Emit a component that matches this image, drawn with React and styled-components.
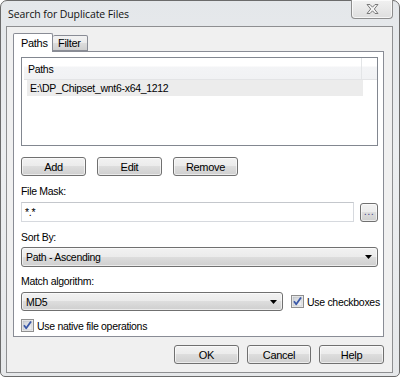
import React from "react";
import styled, { createGlobalStyle } from "styled-components";

const Global = createGlobalStyle`
  html, body {
    margin: 0;
    padding: 0;
    background: #ffffff;
  }
  * {
    box-sizing: border-box;
  }
`;

const Frame = styled.div`
  position: relative;
  width: 400px;
  height: 377px;
  border: 1px solid #6b6b6b;
  border-radius: 7px 7px 5px 5px;
  background: linear-gradient(180deg, #e4e7ea 0%, #eceef0 40%, #e6e8ea 100%);
  display: flex;
  flex-direction: column;
  padding: 0 6px 3px 5px;
  font-family: "Liberation Sans", Arial, sans-serif;
  font-size: 10.5px;
  letter-spacing: -0.3px;
  color: #000;
`;

const TitleBar = styled.div`
  height: 25px;
  display: flex;
  align-items: center;
  padding-left: 2px;
  font-family: "Open Sans", "Liberation Sans", sans-serif;
  font-size: 10.5px;
  letter-spacing: -0.1px;
  color: #111;
`;

const CloseButton = styled.div`
  position: absolute;
  top: -1px;
  right: 6px;
  width: 42px;
  height: 19px;
  border: 1px solid #8d8d8d;
  border-top: none;
  border-radius: 0 0 4px 4px;
  background: linear-gradient(180deg, #f1f1f1 0%, #e8e8e8 50%, #dedede 100%);
  box-shadow: inset 0 0 0 1px rgba(255, 255, 255, 0.7);
  display: flex;
  align-items: center;
  justify-content: center;
`;

const Client = styled.div`
  flex: 1;
  border: 1px solid #8e8f91;
  background: #f0f0f0;
  display: flex;
  flex-direction: column;
  padding: 6px 8px 0 6px;
`;

const TabStrip = styled.div`
  display: flex;
  align-items: flex-end;
  height: 18px;
  position: relative;
  z-index: 1;
`;

const Tab = styled.div`
  height: ${({ active }) => (active ? "19px" : "16px")};
  margin-bottom: ${({ active }) => (active ? "-1px" : "0")};
  padding: 0 ${({ active }) => (active ? "7px" : "5px")};
  width: ${({ w }) => w}px;
  border: 1px solid #898c95;
  border-bottom: ${({ active }) => (active ? "none" : "1px solid #898c95")};
  border-left: ${({ first }) => (first ? "1px solid #898c95" : "none")};
  border-radius: 2px 2px 0 0;
  background: ${({ active }) =>
    active ? "#ffffff" : "linear-gradient(180deg, #f2f2f2 0%, #ebebeb 50%, #dddddd 51%, #cfcfcf 100%)"};
  display: flex;
  align-items: center;
  font-size: 11px;
`;

const Panel = styled.div`
  height: 286px;
  border: 1px solid #898c95;
  background: #ffffff;
  display: flex;
  flex-direction: column;
  padding: 5px 5px 0 7px;
`;

const List = styled.div`
  height: 89px;
  border: 1px solid #828790;
  background: #fff;
  padding: 0 0 0 2px;
  display: flex;
  flex-direction: column;
`;

const ListHeader = styled.div`
  height: 22px;
  display: flex;
  background: linear-gradient(180deg, #ffffff 0%, #ffffff 40%, #f3f4f6 41%, #f1f2f4 100%);
  border-bottom: 1px solid #e3e4e6;
`;

const HeaderCell = styled.div`
  width: ${({ w }) => w}px;
  border-right: 1px solid #e3e5e7;
  display: flex;
  align-items: center;
  padding-left: 4px;
`;

const ListRow = styled.div`
  height: 16px;
  width: 336px;
  margin-left: 3px;
  background: #ececec;
  display: flex;
  align-items: center;
  padding-left: 3px;
`;

const ButtonRow = styled.div`
  display: flex;
  gap: ${({ gap }) => gap}px;
  margin-top: ${({ top }) => top}px;
  justify-content: ${({ end }) => (end ? "flex-end" : "flex-start")};
`;

const Button = styled.div`
  width: ${({ w }) => w || 65}px;
  height: 19px;
  border: 1px solid #707070;
  border-radius: 3px;
  background: linear-gradient(180deg, #f2f2f2 0%, #ebebeb 49%, #dddddd 50%, #cfcfcf 100%);
  box-shadow: inset 0 0 0 1px rgba(255, 255, 255, 0.6);
  display: flex;
  align-items: center;
  justify-content: center;
  font-size: 11px;
`;

const Label = styled.div`
  height: 13px;
  line-height: 13px;
  margin-top: ${({ top }) => top}px;
`;

const FieldRow = styled.div`
  display: flex;
  align-items: center;
  gap: ${({ gap }) => gap || 0}px;
  margin-top: ${({ top }) => top}px;
`;

const TextBox = styled.div`
  width: 333px;
  height: 20px;
  border: 1px solid #d6d9de;
  border-top-color: #c4c7cc;
  background: #fff;
  display: flex;
  align-items: center;
  padding-left: 3px;
`;

const SmallButton = styled(Button)`
  width: 18px;
  letter-spacing: 0.5px;
  padding-bottom: 2px;
  color: #4a4a8a;
`;

const Combo = styled.div`
  flex-shrink: 0;
  width: ${({ w }) => w}px;
  height: ${({ h }) => h}px;
  border: 1px solid #707070;
  border-radius: 3px;
  background: linear-gradient(180deg, #f2f2f2 0%, #ebebeb 49%, #dddddd 50%, #cfcfcf 100%);
  box-shadow: inset 0 0 0 1px rgba(255, 255, 255, 0.6);
  display: flex;
  align-items: center;
  justify-content: space-between;
  padding: 0 5px 0 4px;
`;

const Check = styled.label`
  display: flex;
  align-items: center;
  gap: 3px;
  white-space: nowrap;
  flex-shrink: 0;
  margin-top: ${({ top }) => top || 0}px;
`;

const Arrow = () => (
  <svg width="7" height="4" viewBox="0 0 7 4">
    <path d="M0 0H7L3.5 4Z" fill="#000" />
  </svg>
);

const CheckBox = () => (
  <svg width="13" height="13" viewBox="0 0 13 13">
    <defs>
      <linearGradient id="cbg" x1="0" y1="0" x2="1" y2="1">
        <stop offset="0" stopColor="#cbcfd5" />
        <stop offset="1" stopColor="#f6f6f6" />
      </linearGradient>
    </defs>
    <rect x="0.5" y="0.5" width="12" height="12" fill="#f4f4f4" stroke="#8f8f8f" />
    <rect x="2" y="2" width="9" height="9" fill="url(#cbg)" stroke="#aeb3b9" strokeWidth="0.5" />
    <path d="M3 6.2L5.2 9.2L10 2.5" fill="none" stroke="#3a58a8" strokeWidth="1.8" strokeLinejoin="round" />
  </svg>
);

const CloseGlyph = () => (
  <svg width="13" height="12" viewBox="0 0 13 12">
    <path
      d="M1 1.5L4 1.5L6.5 4.2L9 1.5L12 1.5L8.3 6L12 10.5L9 10.5L6.5 7.8L4 10.5L1 10.5L4.7 6Z"
      fill="#f4f4f4"
      stroke="#7a7a7a"
      strokeWidth="1"
      strokeLinejoin="round"
    />
  </svg>
);

export default function App() {
  return (
    <>
      <Global />
      <Frame>
        <TitleBar>Search for Duplicate Files</TitleBar>
        <CloseButton>
          <CloseGlyph />
        </CloseButton>
        <Client>
          <TabStrip>
            <Tab active first w={40}>Paths</Tab>
            <Tab w={35}>Filter</Tab>
          </TabStrip>
          <Panel>
            <List>
              <ListHeader>
                <HeaderCell w={338}>Paths</HeaderCell>
              </ListHeader>
              <ListRow>E:\DP_Chipset_wnt6-x64_1212</ListRow>
            </List>
            <ButtonRow gap={11} top={11}>
              <Button>Add</Button>
              <Button>Edit</Button>
              <Button>Remove</Button>
            </ButtonRow>
            <Label top={9}>File Mask:</Label>
            <FieldRow gap={6} top={4}>
              <TextBox>*.*</TextBox>
              <SmallButton>...</SmallButton>
            </FieldRow>
            <Label top={9}>Sort By:</Label>
            <FieldRow top={3}>
              <Combo w={357} h={20}>
                <span>Path - Ascending</span>
                <Arrow />
              </Combo>
            </FieldRow>
            <Label top={8}>Match algorithm:</Label>
            <FieldRow gap={8} top={4}>
              <Combo w={262} h={19}>
                <span>MD5</span>
                <Arrow />
              </Combo>
              <Check>
                <CheckBox />
                Use checkboxes
              </Check>
            </FieldRow>
            <Check top={8}>
              <CheckBox />
              Use native file operations
            </Check>
          </Panel>
          <ButtonRow gap={8} top={8} end>
            <Button>OK</Button>
            <Button w={64}>Cancel</Button>
            <Button>Help</Button>
          </ButtonRow>
        </Client>
      </Frame>
    </>
  );
}
